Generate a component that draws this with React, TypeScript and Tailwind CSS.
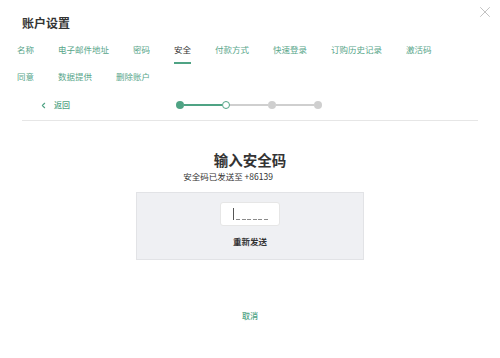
import { X, ChevronLeft } from 'lucide-react';

const TABS = ['名称', '电子邮件地址', '密码', '安全', '付款方式', '快速登录', '订购历史记录', '激活码', '同意', '数据提供', '删除账户'];
const ACTIVE = '安全';

function Stepper() {
  // step 2 of 4: first done, second current
  return (
    <div className="flex items-center">
      <span className="h-[8px] w-[8px] rounded-full bg-[#4fa384]" />
      <span className="h-[1.5px] w-[38px] bg-[#4fa384]" />
      <span className="h-[8px] w-[8px] rounded-full border-[1.5px] border-[#4fa384] bg-white" />
      <span className="h-[1.5px] w-[38px] bg-[#cfcfcf]" />
      <span className="h-[8px] w-[8px] rounded-full bg-[#cfcfcf]" />
      <span className="h-[1.5px] w-[38px] bg-[#cfcfcf]" />
      <span className="h-[8px] w-[8px] rounded-full bg-[#cfcfcf]" />
    </div>
  );
}

export default function App() {
  return (
    <div className="relative h-[358px] w-[500px] overflow-hidden bg-white font-['Noto_Sans_CJK_SC','Noto_Sans',sans-serif] text-[#333]">
      <button type="button" className="absolute right-[6px] top-[3px] text-[#b5b5b5]">
        <X className="h-[18px] w-[18px]" strokeWidth={1.1} />
      </button>

      <h1 className="pl-[22px] pt-[16px] text-[12px] font-bold leading-[14px] text-[#333]">账户设置</h1>

      <div className="mt-[13px] flex w-[467px] flex-wrap gap-x-[24px] pl-[17px]">
        {TABS.map((t) => (
          <div key={t} className="flex h-[27px] flex-col">
            <span className={`text-[8.5px] leading-[12px] ${t === ACTIVE ? 'text-[#333]' : 'text-[#58a68a]'}`}>{t}</span>
            {t === ACTIVE && <span className="mt-[7px] h-[2px] w-full bg-[#4fa384]" />}
          </div>
        ))}
      </div>

      <div className="mx-[22px]">
        <div className="flex h-[16px] items-center">
          <button type="button" className="flex w-[154px] items-center pl-[17px] text-[#4fa384]">
            <ChevronLeft className="h-[9px] w-[9px]" strokeWidth={3} />
            <span className="ml-[6px] text-[8px] font-medium leading-[12px]">返回</span>
          </button>
          <Stepper />
        </div>
        <div className="mt-[7px] h-px bg-[#e6e6e6]" />
      </div>

      <div className="flex flex-col items-center">
        <h2 className="mt-[31px] text-[14.5px] font-bold leading-[16px] text-[#333]">输入安全码</h2>
        <p className="mr-[44px] mt-[2px] text-[8.5px] leading-[12px] text-[#333]">安全码已发送至 +86139</p>

        <div className="mt-[10px] flex h-[68px] w-[228px] flex-col items-center border border-[#e2e3e6] bg-[#eff0f3] pt-[9px]">
          <div className="flex h-[24px] w-[60px] items-center justify-center rounded-[3px] border border-[#e6e6e6] bg-white">
            <div className="flex items-end gap-[1.5px]">
              <span className="mr-[1px] h-[12px] w-px bg-[#555]" />
              {[0, 1, 2, 3, 4, 5].map((i) => (
                <span key={i} className="h-px w-[4px] bg-[#8a8a8a]" />
              ))}
            </div>
          </div>
          <button type="button" className="mt-[9px] text-[8.5px] font-bold leading-[12px] text-[#333]">重新发送</button>
        </div>

        <button type="button" className="mt-[50px] text-[8px] font-medium leading-[12px] text-[#4fa384]">取消</button>
      </div>
    </div>
  );
}
